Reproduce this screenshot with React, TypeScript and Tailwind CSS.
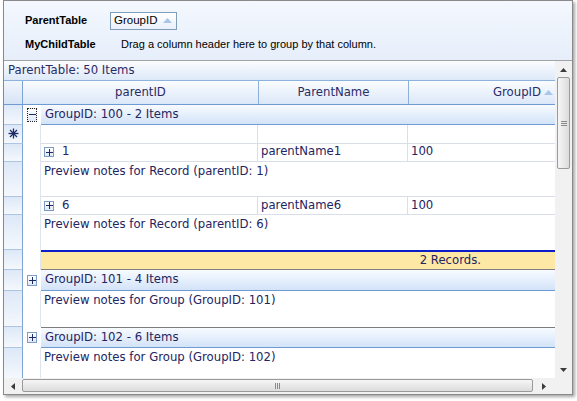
import React from 'react';

const grid = { fontFamily: '"DejaVu Sans", Verdana, sans-serif' };
const ui = { fontFamily: '"Liberation Sans", Tahoma, Arial, sans-serif' };

function SortUp({ className = '' }: { className?: string }) {
  return (
    <svg width="9" height="5" viewBox="0 0 9 5" className={className}>
      <path d="M0 5 L4.5 0 L9 5 Z" fill="#a9c6ea" />
    </svg>
  );
}

function ToggleBox({ minus = false, focused = false }: { minus?: boolean; focused?: boolean }) {
  return (
    <div
      className={`flex items-center justify-center ${
        focused ? 'w-[10px] h-[14px] border border-dotted border-[#222]' : 'w-[10px] h-[11px] border border-[#7f9cc7]'
      } bg-gradient-to-b from-white to-[#dfe8f6]`}
    >
      <svg width="7" height="7" viewBox="0 0 7 7">
        <rect x="0" y="3" width="7" height="1" fill="#1c2a66" />
        {!minus && <rect x="3" y="0" width="1" height="7" fill="#1c2a66" />}
      </svg>
    </div>
  );
}

// row selector cell on the far left
function Ind({ children, last = false }: { children?: React.ReactNode; last?: boolean }) {
  return (
    <div
      className={`w-[19px] shrink-0 border-r border-r-[#7ea4d3] ${
        last ? '' : 'border-b border-b-[#aec4e4]'
      } bg-gradient-to-b from-[#dde8f7] to-[#f5f8fd] flex items-center justify-center`}
    >
      {children}
    </div>
  );
}

function GroupRow({ label, h, minus, focused, topLine }: { label: string; h: string; minus?: boolean; focused?: boolean; topLine?: boolean }) {
  return (
    <div className={`flex ${h}`}>
      <Ind />
      <div className="w-[18px] shrink-0 bg-white flex items-center justify-center">
        <ToggleBox minus={minus} focused={focused} />
      </div>
      <div
        className={`flex-1 flex items-center pl-[4px] text-[11.7px] text-[#24245f] bg-gradient-to-b from-[#f8fbff] to-[#d3e3f8] border-b border-b-[#6f9bd2] ${
          topLine ? 'border-t border-t-[#7d7d7d]' : ''
        }`}
      >
        {label}
      </div>
    </div>
  );
}

function RecordRow({ id, name, group }: { id: string; name: string; group: string }) {
  return (
    <div className="flex h-[18px]">
      <Ind />
      <div className="w-[18px] shrink-0 bg-white border-r border-r-[#dfe5ee]" />
      <div className="flex-1 flex border-b border-b-[#d9dee8] text-[11.7px] text-[#24245f]">
        <div className="w-[217px] flex items-center pl-[3px] border-r border-r-[#d9dee8]">
          <div className="w-[10px] h-[10px] border border-[#7f9cc7] bg-gradient-to-b from-white to-[#dfe8f6] flex items-center justify-center">
            <svg width="7" height="7" viewBox="0 0 7 7">
              <rect x="0" y="3" width="7" height="1" fill="#1c2a66" />
              <rect x="3" y="0" width="1" height="7" fill="#1c2a66" />
            </svg>
          </div>
          <span className="ml-[8px]">{id}</span>
        </div>
        <div className="w-[150px] flex items-center pl-[3px] border-r border-r-[#d9dee8]">{name}</div>
        <div className="flex-1 flex items-center pl-[3px]">{group}</div>
      </div>
    </div>
  );
}

function PreviewRow({ text, h, bottom = '', last = false }: { text: string; h: string; bottom?: string; last?: boolean }) {
  return (
    <div className={`flex ${h}`}>
      <Ind last={last} />
      <div className="w-[18px] shrink-0 bg-white border-r border-r-[#dfe5ee]" />
      <div className={`flex-1 bg-white pl-[3px] pt-[1px] text-[11.7px] text-[#24245f] ${bottom}`}>{text}</div>
    </div>
  );
}

export default function App() {
  return (
    <div className="w-[577px] h-[401px] bg-white overflow-hidden">
      <div className="ml-[3px] w-[570px] h-[395px] border border-[#8a8a8a] flex flex-col shadow-[2px_2px_3px_rgba(0,0,0,0.35)]">
        {/* group-by panel */}
        <div className="h-[60px] shrink-0 border-b border-b-[#a3a3a3] bg-gradient-to-b from-[#f4f8fe] to-[#e6eefa] pl-[21px] pt-[10px] text-[11px] text-black" style={ui}>
          <div className="flex items-center h-[19px]">
            <span className="w-[85px] font-bold">ParentTable</span>
            <div className="w-[67px] h-[18px] border border-[#7f9db9] bg-gradient-to-b from-white to-[#e9f0fa] flex items-center justify-between pl-[3px] pr-[4px] text-[11.5px]">
              <span>GroupID</span>
              <SortUp />
            </div>
          </div>
          <div className="flex items-center h-[19px] mt-[5px]">
            <span className="w-[96px] font-bold">MyChildTable</span>
            <span>Drag a column header here to group by that column.</span>
          </div>
        </div>

        {/* grid body */}
        <div className="flex h-[317px] shrink-0" style={grid}>
          <div className="w-[551px] flex flex-col overflow-hidden">
            <div className="h-[20px] shrink-0 flex items-center pl-[4px] text-[11.7px] text-[#2b2b66] bg-gradient-to-b from-[#fbfdff] to-[#dde8f8] border-b border-b-[#8eb2de]">
              ParentTable: 50 Items
            </div>
            <div className="h-[24px] shrink-0 flex border-b border-b-[#6f9bd2] text-[11.7px] text-[#2b2b66]">
              <div className="w-[19px] border-r border-r-[#7ea4d3] bg-gradient-to-b from-[#f2f6fd] to-[#d6e3f6]" />
              <div className="w-[236px] flex items-center justify-center border-r border-r-[#8eb0da] bg-gradient-to-b from-[#fbfdff] to-[#dbe7f8]">parentID</div>
              <div className="w-[150px] flex items-center justify-center border-r border-r-[#8eb0da] bg-gradient-to-b from-[#fbfdff] to-[#dbe7f8]">ParentName</div>
              <div className="flex-1 flex items-center justify-end pr-[2px] bg-gradient-to-b from-[#fbfdff] to-[#dbe7f8]">
                <span className="mr-[3px]">GroupID</span>
                <SortUp />
              </div>
            </div>

            <GroupRow label="GroupID: 100 - 2 Items" h="h-[20px]" minus focused />

            {/* new row */}
            <div className="flex h-[19px]">
              <Ind>
                <svg width="11" height="11" viewBox="0 0 11 11">
                  <g stroke="#1c2a66" strokeWidth="1.3">
                    <line x1="5.5" y1="0.5" x2="5.5" y2="10.5" />
                    <line x1="0.5" y1="5.5" x2="10.5" y2="5.5" />
                    <line x1="2" y1="2" x2="9" y2="9" />
                    <line x1="9" y1="2" x2="2" y2="9" />
                  </g>
                </svg>
              </Ind>
              <div className="w-[18px] shrink-0 bg-white border-r border-r-[#dfe5ee]" />
              <div className="flex-1 flex border-b border-b-[#d9dee8]">
                <div className="w-[217px] border-r border-r-[#d9dee8]" />
                <div className="w-[150px] border-r border-r-[#d9dee8]" />
              </div>
            </div>

            <RecordRow id="1" name="parentName1" group="100" />
            <PreviewRow text="Preview notes for Record (parentID: 1)" h="h-[36px]" bottom="border-b border-b-[#d9dee8]" />
            <RecordRow id="6" name="parentName6" group="100" />
            <PreviewRow text="Preview notes for Record (parentID: 6)" h="h-[35px]" />

            {/* group footer */}
            <div className="flex h-[20px]">
              <Ind />
              <div className="w-[18px] shrink-0 bg-white border-r border-r-[#dfe5ee]" />
              <div className="flex-1 flex items-center justify-end pr-[74px] bg-[#fde8a6] border-t-2 border-t-[#0a1dc8] border-b border-b-[#7d7d7d] text-[11.7px] text-[#24245f]">
                2 Records.
              </div>
            </div>

            <GroupRow label="GroupID: 101 - 4 Items" h="h-[21px]" />
            <PreviewRow text="Preview notes for Group (GroupID: 101)" h="h-[37px]" />
            <GroupRow label="GroupID: 102 - 6 Items" h="h-[21px]" topLine />
            <PreviewRow text="Preview notes for Group (GroupID: 102)" h="h-[30px]" last />
          </div>

          {/* vertical scrollbar */}
          <div className="w-[17px] shrink-0 bg-[#f1f1f1] flex flex-col items-center">
            <div className="h-[17px] flex items-center justify-center">
              <svg width="7" height="4" viewBox="0 0 7 4"><path d="M0 4 L3.5 0 L7 4 Z" fill="#3b3b3b" /></svg>
            </div>
            <div className="w-[13px] h-[92px] mt-[-1px] rounded-[2px] border border-[#9a9a9a] bg-gradient-to-r from-[#f6f6f6] to-[#dcdcdc] flex flex-col items-center justify-center gap-[1px]">
              <div className="w-[6px] h-px bg-[#8a8a8a]" />
              <div className="w-[6px] h-px bg-[#8a8a8a]" />
              <div className="w-[6px] h-px bg-[#8a8a8a]" />
            </div>
            <div className="flex-1" />
            <div className="h-[17px] flex items-center justify-center">
              <svg width="7" height="4" viewBox="0 0 7 4"><path d="M0 0 L3.5 4 L7 0 Z" fill="#3b3b3b" /></svg>
            </div>
          </div>
        </div>

        {/* horizontal scrollbar */}
        <div className="h-[16px] shrink-0 flex bg-[#f1f1f1]">
          <div className="w-[17px] flex items-center justify-center">
            <svg width="4" height="7" viewBox="0 0 4 7"><path d="M4 0 L0 3.5 L4 7 Z" fill="#3b3b3b" /></svg>
          </div>
          <div className="w-[511px] h-[13px] mt-[1px] ml-[1px] rounded-[2px] border border-[#9a9a9a] bg-gradient-to-b from-[#f6f6f6] to-[#dcdcdc] flex items-center justify-center gap-[1px]">
            <div className="w-px h-[6px] bg-[#8a8a8a]" />
            <div className="w-px h-[6px] bg-[#8a8a8a]" />
            <div className="w-px h-[6px] bg-[#8a8a8a]" />
          </div>
          <div className="w-[22px] flex items-center justify-center">
            <svg width="4" height="7" viewBox="0 0 4 7"><path d="M0 0 L4 3.5 L0 7 Z" fill="#3b3b3b" /></svg>
          </div>
        </div>
      </div>
    </div>
  );
}
